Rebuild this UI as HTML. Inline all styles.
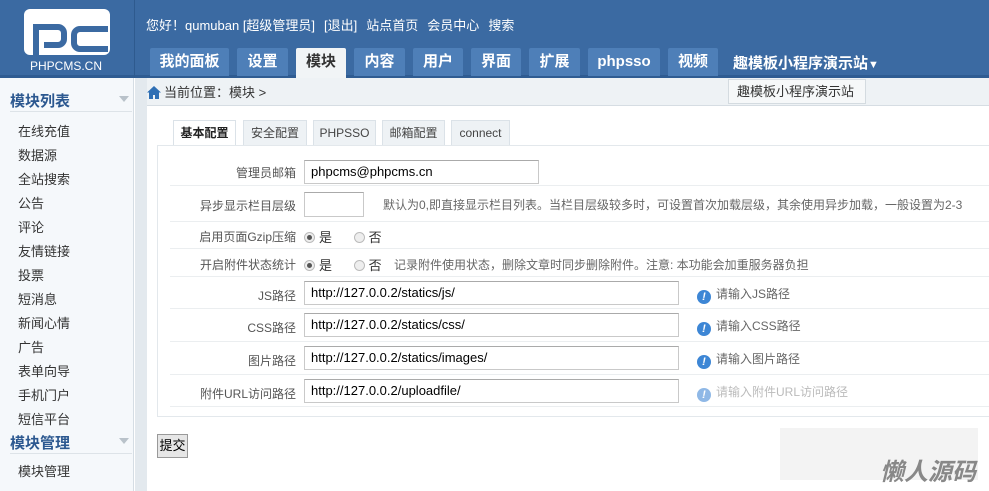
<!DOCTYPE html>
<html><head><meta charset="utf-8"><style>
*{margin:0;padding:0;box-sizing:border-box}
body{width:989px;height:491px;overflow:hidden;background:#fff;font-family:"Liberation Sans","Noto Sans CJK SC",sans-serif;font-size:12px;color:#444;position:relative}
.hd{position:absolute;left:0;top:0;width:989px;height:78px;background:#3b6aa2;border-bottom:3px solid #2f5c92}
.vl{position:absolute;left:134px;top:0;width:1px;height:78px;background:#2e5a8e}
.top{position:absolute;left:146px;top:15px;color:#fff;font-size:13px;white-space:nowrap}
.top span{margin-right:9px}
.tab{position:absolute;top:48px;height:28px;background:#4e7fb8;color:#fff;font-weight:bold;font-size:15px;line-height:28px;text-align:center;border-radius:2px 2px 0 0}
.tab.on{background:#f1f4f6;color:#333;height:30px}
.sb{position:absolute;left:0;top:78px;width:134px;height:413px;background:#f5f8fb;border-right:1px solid #d5dde4}
.sb h3{font-size:15px;color:#2c5890;margin:12px 0 0 10px;height:22px;position:relative;border-bottom:1px solid #dde3e8;width:122px}
.sb h3 i{position:absolute;right:3px;top:6px;border:5px solid transparent;border-top:6px solid #b9c2ca}
.sb p{font-size:13px;color:#333;margin-left:18px;height:24px;line-height:24px}
.gap{position:absolute;left:135px;top:78px;width:12px;height:413px;background:#e3e9ee}
.crumb{position:absolute;left:147px;top:78px;width:842px;height:28px;background:#eef2f5;border-bottom:1px solid #d6dde3;font-size:13px;color:#333;line-height:30px;padding-left:0}
.dd{position:absolute;left:728px;top:79px;width:138px;height:25px;background:#f6f8f9;border:1px solid #d4dbe0;font-size:13px;color:#333;line-height:24px;padding-left:8px}
.t2{position:absolute;top:120px;height:25px;border:1px solid #dbe2e8;border-bottom:none;background:#eef2f5;font-size:12px;color:#444;line-height:25px;text-align:center}
.t2.on{background:#fff;color:#222;height:26px;font-weight:bold}
.box{position:absolute;left:157px;top:145px;width:840px;height:272px;border:1px solid #e3e8ec}
.row{position:absolute;left:170px;width:830px;border-bottom:1px solid #ebeef0}
.lb{position:absolute;left:0;width:126px;text-align:right;color:#555;font-size:12px;white-space:nowrap}
.in{position:absolute;left:134px;height:24px;border:1px solid #c9c9c9;border-top-color:#aaa;background:#fff;font-size:13px;color:#000;padding-left:6px;line-height:22px}
.tip{position:absolute;color:#666;font-size:12px;white-space:nowrap}
.ic{display:inline-block;width:14px;height:14px;border-radius:50%;background:#3d86d5;color:#fff;font-weight:bold;font-size:11px;text-align:center;line-height:14px;vertical-align:-2px;margin-right:5px}
.rd{display:inline-block;width:11px;height:11px;border-radius:50%;border:1px solid #bbb;background:#eee;vertical-align:-1px;margin-right:4px;position:relative}
.rd.on:after{content:"";position:absolute;left:2px;top:2px;width:5px;height:5px;border-radius:50%;background:#555}
</style></head><body>
<div class="hd">
<svg style="position:absolute;left:22px;top:9px" width="89" height="63" viewBox="0 0 89 63">
<rect x="2" y="0" width="86" height="46" rx="6" fill="#fff"/>
<path d="M14 46V18h22a6 6 0 0 1 6 6v6a6 6 0 0 1-6 6H22" stroke="#3b6aa2" stroke-width="6" fill="none"/>
<path d="M86 20H58a6 6 0 0 0-6 6v8a6 6 0 0 0 6 6h28" stroke="#3b6aa2" stroke-width="6" fill="none"/>
<text x="44" y="61" text-anchor="middle" fill="#fff" font-size="12" font-family="Liberation Sans">PHPCMS.CN</text>
</svg>
<div class="vl"></div>
<div class="top"><span>您好！qumuban [超级管理员]</span><span>[退出]</span><span>站点首页</span><span>会员中心</span><span>搜索</span></div>
<div class="tab" style="left:150px;width:79px">我的面板</div>
<div class="tab" style="left:237px;width:51px">设置</div>
<div class="tab on" style="left:296px;width:50px">模块</div>
<div class="tab" style="left:354px;width:51px">内容</div>
<div class="tab" style="left:413px;width:50px">用户</div>
<div class="tab" style="left:471px;width:50px">界面</div>
<div class="tab" style="left:529px;width:51px">扩展</div>
<div class="tab" style="left:588px;width:72px">phpsso</div>
<div class="tab" style="left:668px;width:50px">视频</div>
<div style="position:absolute;left:733px;top:52px;color:#fff;font-weight:bold;font-size:15px">趣模板小程序演示站<span style="font-size:11px">▼</span></div>
</div>
<div class="sb">
<h3>模块列表<i></i></h3>
<div style="height:8px"></div>
<p>在线充值</p><p>数据源</p><p>全站搜索</p><p>公告</p><p>评论</p><p>友情链接</p><p>投票</p><p>短消息</p><p>新闻心情</p><p>广告</p><p>表单向导</p><p>手机门户</p><p>短信平台</p>
<h3 style="margin-top:0">模块管理<i></i></h3>
<div style="height:6px"></div>
<p>模块管理</p>
</div>
<div class="gap"></div>
<div class="crumb"><svg style="position:absolute;left:0;top:8px" width="14" height="13" viewBox="0 0 14 13"><path d="M7 0L0 6.5h2V13h4V9h2v4h4V6.5h2z" fill="#2f6fb4"/></svg><span style="position:absolute;left:17px">当前位置：模块 &gt;</span></div>
<div class="dd">趣模板小程序演示站</div>
<div class="t2 on" style="left:173px;width:63px">基本配置</div>
<div class="t2" style="left:243px;width:64px">安全配置</div>
<div class="t2" style="left:313px;width:63px">PHPSSO</div>
<div class="t2" style="left:382px;width:63px">邮箱配置</div>
<div class="t2" style="left:451px;width:59px">connect</div>
<div class="box"></div>
<div class="row" style="top:158px;height:28px"><span class="lb" style="top:6px">管理员邮箱</span><div class="in" style="top:2px;width:235px">phpcms@phpcms.cn</div></div>
<div class="row" style="top:186px;height:36px"><span class="lb" style="top:11px">异步显示栏目层级</span><div class="in" style="top:6px;width:60px;height:25px"></div><span class="tip" style="left:213px;top:10px">默认为0,即直接显示栏目列表。当栏目层级较多时，可设置首次加载层级，其余使用异步加载，一般设置为2-3</span></div>
<div class="row" style="top:222px;height:27px"><span class="lb" style="top:6px">启用页面Gzip压缩</span><span class="tip" style="left:134px;top:5px;color:#333;font-size:13px"><i class="rd on"></i>是 &nbsp;&nbsp;&nbsp;&nbsp;&nbsp;<i class="rd"></i>否</span></div>
<div class="row" style="top:249px;height:28px"><span class="lb" style="top:7px">开启附件状态统计</span><span class="tip" style="left:134px;top:6px;color:#333;font-size:13px"><i class="rd on"></i>是 &nbsp;&nbsp;&nbsp;&nbsp;&nbsp;<i class="rd"></i>否</span><span class="tip" style="left:224px;top:7px">记录附件使用状态，删除文章时同步删除附件。注意: 本功能会加重服务器负担</span></div>
<div class="row" style="top:277px;height:32px"><span class="lb" style="top:10px">JS路径</span><div class="in" style="top:4px;width:375px">http://127.0.0.2/statics/js/</div><span class="tip" style="left:527px;top:8px"><i class="ic">!</i>请输入JS路径</span></div>
<div class="row" style="top:309px;height:33px"><span class="lb" style="top:10px">CSS路径</span><div class="in" style="top:4px;width:375px">http://127.0.0.2/statics/css/</div><span class="tip" style="left:527px;top:8px"><i class="ic">!</i>请输入CSS路径</span></div>
<div class="row" style="top:342px;height:33px"><span class="lb" style="top:10px">图片路径</span><div class="in" style="top:4px;width:375px">http://127.0.0.2/statics/images/</div><span class="tip" style="left:527px;top:8px"><i class="ic">!</i>请输入图片路径</span></div>
<div class="row" style="top:375px;height:32px"><span class="lb" style="top:10px">附件URL访问路径</span><div class="in" style="top:4px;width:375px">http://127.0.0.2/uploadfile/</div><span class="tip" style="left:527px;top:8px;color:#bbb"><i class="ic" style="background:#8fb8e6">!</i>请输入附件URL访问路径</span></div>
<div style="position:absolute;left:157px;top:434px;width:31px;height:24px;border:1px solid #999;background:#e6e6e6;font-size:13px;color:#000;line-height:22px;text-align:center">提交</div>
<div style="position:absolute;left:780px;top:428px;width:198px;height:52px;background:#f2f2f2;opacity:.9"></div>
<div style="position:absolute;left:880px;top:452px;font-size:24px;font-weight:bold;font-style:italic;color:#888">懒人源码</div>
</body></html>
